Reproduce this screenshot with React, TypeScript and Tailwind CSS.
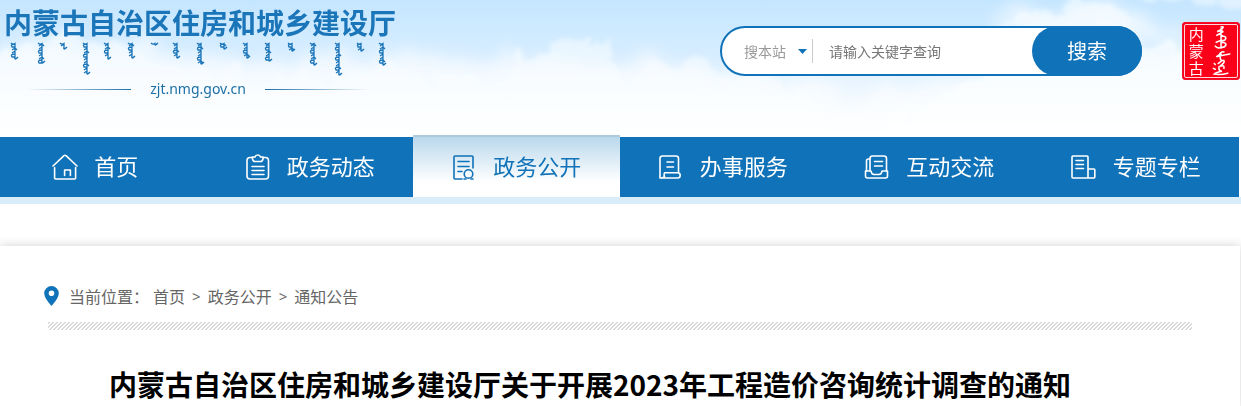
import type { ReactNode } from 'react';

const Icon = ({ children }: { children: ReactNode }) => (
  <svg
    viewBox="0 0 26 26"
    className="h-[26px] w-[26px] shrink-0"
    fill="none"
    stroke="currentColor"
    strokeWidth="1.6"
    strokeLinecap="round"
    strokeLinejoin="round"
    aria-hidden="true"
  >
    {children}
  </svg>
);

const navItems = [
  {
    label: '首页',
    icon: (
      <Icon>
        <path d="M1 12 L12 1.6 Q13 .9 14 1.6 L25 12" />
        <path d="M2.6 13.5 V24 Q2.6 25 3.6 25 H22.6 Q23.6 25 23.6 24 V13.5" />
        <path d="M12.6 21.5 V16 H18.4 V21.5" />
      </Icon>
    ),
  },
  {
    label: '政务动态',
    icon: (
      <Icon>
        <path d="M7.5 3.5 H5 Q2 3.5 2 6.5 V22 Q2 25 5 25 H20.5 Q23.5 25 23.5 22 V6.5 Q23.5 3.5 20.5 3.5 H18" />
        <path d="M7.5 3 H10 Q10.5 1 12.75 1 Q15 1 15.5 3 H18 V5 Q17.5 7.5 15.5 7.5 H10 Q8 7.5 7.5 5 Z" />
        <path d="M7 12.5 H19 M7 16.5 H19 M7 20.5 H19" />
      </Icon>
    ),
  },
  {
    label: '政务公开',
    active: true,
    icon: (
      <Icon>
        <path d="M22 14 V3 Q22 2 21 2 H4 Q3 2 3 3 V24 Q3 25 4 25 H11" />
        <path d="M7 7.5 H18 M7 12.5 H18 M7 17.5 H11" />
        <circle cx="17.5" cy="20" r="4.3" />
        <path d="M13 25 H15 M20 25 H22" />
      </Icon>
    ),
  },
  {
    label: '办事服务',
    icon: (
      <Icon>
        <path d="M2 23.5 V4.5 Q2 2 4.5 2 H18 Q20.5 2 20.5 4.5 V18.5" />
        <path d="M9 8 H15.5 M9 13 H15.5" />
        <path d="M2 24 H19.5 Q22.2 24 22.2 21.3 Q22.2 18.7 19.5 18.7 H6.5 Q5.5 21 6.5 22.5 Q5 24 2 24" />
      </Icon>
    ),
  },
  {
    label: '互动交流',
    icon: (
      <Icon>
        <path d="M6 16.5 V4.500 Q6 2 8.500 2 H20 Q22.500 2 22.500 4.500 V17" />
        <path d="M6 5 H4.500 Q2.500 5 2.500 7 V17" />
        <path d="M10.500 7.500 H18.500 M10.500 12 H18.500" />
        <path d="M1.500 17 H7 Q7.500 20.500 10 20.500 H15 Q17.500 20.500 18 17 H23.500 V22 Q23.500 24 21.500 24 H3.500 Q1.500 24 1.500 22 Z" />
      </Icon>
    ),
  },
  {
    label: '专题专栏',
    icon: (
      <Icon>
        <path d="M17 24 V3 Q17 2 16 2 H2 Q1 2 1 3 V23 Q1 24 2 24 H23 Q23.800 24 23.800 23 V16 Q23.800 15 23 15 H17" />
        <path d="M5 6.500 H12.500 M5 10.500 H12.500 M5 14.500 H12.500" />
      </Icon>
    ),
  },
];

// centre and length of each vertical word under the name
const words = [
  [14, 18], [41, 22], [63, 8], [86, 33], [107, 18], [131, 17], [154, 4], [176, 17], [200, 23],
  [223, 8], [246, 17], [268, 20], [291, 10], [313, 24], [338, 34], [360, 10], [382, 24],
];

const strokeFor = (x: number, length: number, index: number) => {
  let d = `M${x - 3} 1 Q${x - 1} 3 ${x + 1} 1.5 V${length - 2}`;
  let y = 2;
  for (let step = index; y < length - 3; step++) {
    d += step % 3 === 0
      ? ` M${x + 1} ${y} Q${x - 4} ${y} ${x - 2} ${y + 3} L${x + 1} ${y + 3}`
      : ` M${x + 1} ${y} L${x - 2} ${y + 2}`;
    if (step % 4 === 1) d += ` M${x + 1} ${y} L${x + 3} ${y + 2}`;
    y += step % 3 === 0 ? 4 : 3;
  }
  return `${d} M${x + 1} ${length - 3} Q${x} ${length + 1} ${x + 4} ${length - 3}`;
};

const Clouds = () => (
  <svg
    className="absolute inset-0 h-full w-full"
    viewBox="0 0 1241 137"
    preserveAspectRatio="none"
    aria-hidden="true"
  >
    <defs>
      <linearGradient id="sky" x1="0" y1="0" x2="0" y2="1">
        <stop offset="0" stopColor="#c5e6ff" />
        <stop offset=".45" stopColor="#d9eeff" />
        <stop offset="1" stopColor="#f4faff" />
      </linearGradient>
      <linearGradient id="haze" x1="0" y1="0" x2="0" y2="1">
        <stop offset=".4" stopColor="#fff" stopOpacity="0" />
        <stop offset="1" stopColor="#fff" stopOpacity=".85" />
      </linearGradient>
      <filter id="puff" filterUnits="userSpaceOnUse" x="-20" y="-30" width="1290" height="200">
        <feTurbulence type="fractalNoise" baseFrequency=".045" numOctaves="5" seed="3" />
        <feDisplacementMap in="SourceGraphic" scale="42" xChannelSelector="R" yChannelSelector="G" />
        <feGaussianBlur stdDeviation="2" />
      </filter>
      <filter id="wisp" filterUnits="userSpaceOnUse" x="-20" y="-30" width="1290" height="200">
        <feTurbulence type="fractalNoise" baseFrequency=".03" numOctaves="4" seed="11" />
        <feDisplacementMap in="SourceGraphic" scale="50" xChannelSelector="R" yChannelSelector="G" />
        <feGaussianBlur stdDeviation="7" />
      </filter>
    </defs>
    <rect width="1241" height="137" fill="url(#sky)" />
    <g filter="url(#wisp)" fill="#f8fcff" opacity=".75">
      <path d="M-20 160 V50 Q60 38 120 42 L260 64 L400 58 L520 60 L620 62 L800 80 L860 104 L960 72 L1260 46 V170 Z" />
      <path d="M1000 36 L1030 8 L1090 0 L1130 8 L1180 40 Z" />
    </g>
    <g filter="url(#puff)" fill="#fafdff">
      <path
        opacity=".55"
        d="M-20 170 V60 Q20 42 50 48 Q75 32 110 40 Q140 54 160 66 Q230 66 260 78 Q330 90 350 72 Q400 62 420 72 Q450 82 490 82 L508 80 Q525 60 545 42 Q570 36 598 38 L604 66 Q615 78 630 78 Q660 58 685 62 Q715 68 735 70 Q775 76 800 92 Q820 116 840 140 V170 Z"
      />
      <path opacity=".75" d="M860 170 Q870 126 910 114 Q940 98 960 88 Q975 74 1010 68 Q1090 60 1140 50 Q1200 42 1270 48 V170 Z" />
      <path opacity=".55" d="M990 36 Q1010 14 1035 12 Q1060 0 1085 4 Q1110 6 1125 14 Q1130 30 1160 38 L1000 44 Z" />
      <path opacity=".5" d="M1140 -24 H1270 V10 Q1200 0 1140 2 Z" />
    </g>
    <rect width="1241" height="137" fill="url(#haze)" />
  </svg>
);

const Brand = () => (
  <div className="w-[392px] text-[#1b75b9]">
    <div className="text-[28px] leading-[36px] font-bold whitespace-nowrap">内蒙古自治区住房和城乡建设厅</div>
    <svg viewBox="4 0 392 37" className="mt-0.5 h-[37px] w-full" fill="none" stroke="currentColor" strokeWidth="1.3" aria-hidden="true">
      {words.map(([x, length], index) => (
        <path key={x} d={strokeFor(x, length, index)} />
      ))}
    </svg>
    <div className="flex items-center justify-center pr-1">
      <span className="h-px w-[104px] bg-linear-to-r from-transparent to-[#1b6fa5]" />
      <span className="w-[134px] text-center font-['Noto_Sans'] text-[14px] leading-[20px] text-[#1b6fa5]">zjt.nmg.gov.cn</span>
      <span className="h-px w-[104px] bg-linear-to-l from-transparent to-[#1b6fa5]" />
    </div>
  </div>
);

const SearchForm = () => (
  <form
    onSubmit={(e) => e.preventDefault()}
    className="mt-[26px] ml-auto flex h-[50px] w-[422px] items-center rounded-full border-2 border-[#1072b8] bg-white pl-[22px]"
  >
    <div className="relative">
      <select
        aria-label="搜索范围"
        className="block h-6 w-[69px] appearance-none border-r border-[#cccccc] text-[14px] leading-[24px] text-[#999999] outline-none"
      >
        <option>搜本站</option>
      </select>
      <svg viewBox="0 0 9 5" className="pointer-events-none absolute top-[10px] right-[6px] h-[5px] w-[9px] fill-[#1072b8]" aria-hidden="true">
        <path d="M0 0 H9 L4.5 5 Z" />
      </svg>
    </div>
    <input
      type="text"
      aria-label="关键字"
      placeholder="请输入关键字查询"
      className="h-10 w-full min-w-0 flex-1 pl-4 text-[14px] outline-none placeholder:text-[#757575]"
    />
    <button type="submit" className="-m-0.5 h-[50px] w-[110px] rounded-full bg-[#1072b8] text-[20px] text-white">
      搜索
    </button>
  </form>
);

const Seal = () => (
  <div className="mt-[22px] ml-10 flex h-[58px] w-[58px] shrink-0 rounded-[3px] border border-[#f0102a] bg-[#fb0019] p-px text-white">
    <div className="flex flex-1 justify-around rounded-[2px] border border-[#ffd5d9]">
      <div className="flex flex-col items-center justify-center font-['Liberation_Sans','Noto_Sans_CJK_SC',sans-serif] text-[15px] leading-[17px]">
        <span>内</span>
        <span>蒙</span>
        <span>古</span>
      </div>
      <svg viewBox="0 0 22 54" className="h-[52px] w-[22px]" fill="none" stroke="currentColor" strokeWidth="1.6" strokeLinecap="round" aria-hidden="true">
        <path d="M10 2 Q14 1 11 4 L6 7 Q11 5 12 7 L5 11 Q10 8 11 11 M10 4 V24 M10 12 Q15 11 15 14 Q14 17 10 16 L5 18 M10 18 Q16 18 15 21 Q13 24 10 23 Q7 25 4 22" />
        <path d="M13 28 Q10 27 8 31 L5 33 Q12 31 19 30 M10 30 Q8 36 11 37 L7 40 M11 37 Q14 36 13 39 L9 43 Q14 41 13 45 M3 40 L4 41 M2 45 L4 46 M8 43 Q7 48 11 48 Q5 49 3 51 Q10 52 17 50" />
      </svg>
    </div>
  </div>
);

export default function App() {
  return (
    <div className="overflow-hidden bg-white font-['Noto_Sans_CJK_SC',sans-serif]">
      <header className="relative">
        <Clouds />
        <div className="relative flex h-[137px] items-start pl-1 pr-px">
          <div className="pt-1">
            <Brand />
          </div>
          <SearchForm />
          <Seal />
        </div>
      </header>

      <nav className="relative border-b-[7px] border-[#d9ecfa]">
        <ul className="mr-0.5 flex h-[60px] items-end bg-[#1072b8]">
          {navItems.map((item) => (
            <li key={item.label} className="flex-1">
              <a
                href="#"
                className={`flex items-center justify-center gap-4 text-[22px] ${
                  item.active
                    ? 'h-[62px] border-t-2 border-[#adcbdc] bg-linear-to-b from-[#b9d8ec] to-white to-75% text-[#1072b8]'
                    : 'h-[60px] text-white'
                }`}
              >
                {item.icon}
                <span className="min-w-15 pb-1">{item.label}</span>
              </a>
            </li>
          ))}
        </ul>
      </nav>

      <main className="mt-[42px] mr-px bg-white px-12 pt-[38px] pb-1 shadow-[0_0_10px_rgba(0,0,0,0.18)]">
        <div className="-ml-1 flex items-center text-[16px] leading-[24px] text-[#666666]">
          <svg viewBox="0 0 15 20" className="mr-[10px] h-5 w-[15px] fill-[#1072b8]" aria-hidden="true">
            <path fillRule="evenodd" d="M7.5 0 A7.3 7.3 0 0 1 14.8 7.3 Q14.8 12 7.5 20 Q.2 12 .2 7.3 A7.3 7.3 0 0 1 7.5 0 Z M7.5 4.5 A2.8 2.8 0 1 0 7.5 10.1 A2.8 2.8 0 1 0 7.5 4.5 Z" />
          </svg>
          <span className="mr-1">当前位置：</span>
          <div className="flex gap-[7px]">
            <a href="#">首页</a>
            <span className="font-['Noto_Sans'] text-[15px]">&gt;</span>
            <a href="#">政务公开</a>
            <span className="font-['Noto_Sans'] text-[15px]">&gt;</span>
            <a href="#">通知公告</a>
          </div>
        </div>
        <div className="mt-[14px] h-2 bg-[linear-gradient(135deg,#dadada_25%,#ffffff_25%,#ffffff_50%,#dadada_50%,#dadada_75%,#ffffff_75%)] bg-size-[4px_4px]" />
        <h1 className="mt-[34px] pr-15 text-center text-[28px] leading-[40px] font-bold text-black">
          内蒙古自治区住房和城乡建设厅关于开展2023年工程造价咨询统计调查的通知
        </h1>
      </main>
    </div>
  );
}
